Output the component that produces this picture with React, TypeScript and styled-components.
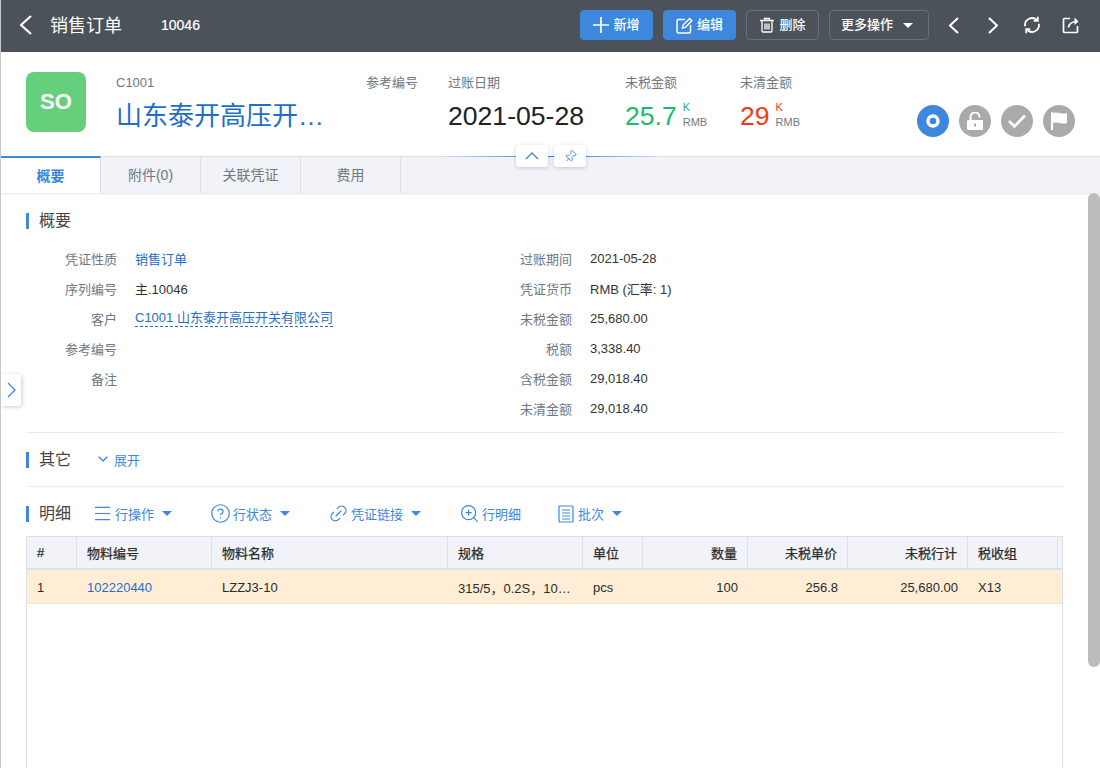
import React from 'react'
import styled, { createGlobalStyle } from 'styled-components'
import { ChevronDown, CircleHelp, Link2, Menu, Pin, ZoomIn } from 'lucide-react'

const blue = '#3d87dd'
const line = '#dcdfe8'

const Global = createGlobalStyle`
  html, body { margin: 0; height: 100%; overflow: hidden; background: #fff; }
  body { font-family: "Liberation Sans", "Noto Sans CJK SC", sans-serif; color: #333; }
  * { box-sizing: border-box; }
`

const Page = styled.div`
  position: relative;
  height: 768px;
  overflow: hidden;
  border-left: 1px solid #c8c8c8;
`

const TopBar = styled.header`
  height: 52px;
  background: #4b5259;
  display: flex;
  align-items: center;
  padding-right: 10px;
  color: #fff;
`

const BackButton = styled.button`
  width: 49px;
  height: 52px;
  padding: 0 0 2px 19px;
  border: 0;
  background: none;
  color: #fff;
  display: flex;
  align-items: center;
  justify-content: flex-start;
`

const PageTitle = styled.h1`
  margin: 0 0 4px;
  width: 111px;
  font-size: 18px;
  font-weight: 400;
`

const DocNumber = styled.span`
  font-size: 14px;
  margin-bottom: 2px;
  -webkit-text-stroke: 0.2px #fff;
`

const TopActions = styled.div`
  margin-left: auto;
  margin-top: -2px;
  display: flex;
  align-items: center;
  gap: 10px;
`

const TopButton = styled.button<{ $primary?: boolean; $width: number }>`
  width: ${p => p.$width}px;
  height: 30px;
  padding: 0 0 3px;
  display: flex;
  align-items: center;
  justify-content: center;
  gap: 4px;
  border-radius: 4px;
  border: 1px solid ${p => (p.$primary ? blue : '#67717d')};
  background: ${p => (p.$primary ? blue : 'transparent')};
  color: #fff;
  font: inherit;
  font-size: 13px;
  font-weight: 500;

  svg {
    margin-top: 3px;
  }
`

const Caret = styled.i<{ $color?: string }>`
  display: inline-block;
  width: 0;
  height: 0;
  margin-top: ${p => (p.$color ? 0 : 3)}px;
  margin-left: ${p => (p.$color ? 4 : 6)}px;
  margin-right: ${p => (p.$color ? 0 : 4)}px;
  border-left: 5px solid transparent;
  border-right: 5px solid transparent;
  border-top: 5px solid ${p => p.$color || '#fff'};
`

const NavIcons = styled.div`
  display: flex;
  margin-left: -5px;
`

const NavIcon = styled.span`
  width: 39px;
  height: 30px;
  display: flex;
  align-items: center;
  justify-content: center;
  color: #fff;
`

const Summary = styled.section`
  height: 104px;
  background: #fff;
  display: flex;
  padding: 20px 25px 0 25px;
`

const Badge = styled.div`
  width: 60px;
  height: 60px;
  border-radius: 8px;
  background: #66cf7b;
  color: #fff;
  font-size: 22px;
  font-weight: 700;
  display: flex;
  align-items: center;
  justify-content: center;
`

const Stat = styled.div<{ $width: number; $left?: number }>`
  width: ${p => p.$width}px;
  margin-left: ${p => p.$left || 0}px;
  flex: none;
`

const StatLabel = styled.div`
  font-size: 13px;
  line-height: 22px;
  color: #6f7884;
`

const CustomerName = styled.div`
  width: 210px;
  margin-top: 3px;
  font-size: 26px;
  line-height: 38px;
  color: #1f6ec9;
  white-space: nowrap;
  overflow: hidden;
  text-overflow: ellipsis;
`

const BigValue = styled.div<{ $color?: string }>`
  margin-top: 3px;
  font-size: 26.6px;
  line-height: 38px;
  color: ${p => p.$color || '#222'};
`

const AmountRow = styled.div`
  display: flex;
  align-items: flex-start;
  gap: 6px;
`

const Unit = styled.div<{ $color: string }>`
  margin-top: 6px;
  font-size: 11px;
  line-height: 15px;
  color: #6f7884;

  b {
    display: block;
    font-weight: 400;
    color: ${p => p.$color};
  }
`

const StatusIcons = styled.div`
  margin-left: auto;
  margin-top: 33px;
  display: flex;
  gap: 10px;
`

const StatusDot = styled.div<{ $active?: boolean }>`
  width: 32px;
  height: 32px;
  border-radius: 50%;
  background: ${p => (p.$active ? blue : '#aaa')};
  display: flex;
  align-items: center;
  justify-content: center;
`

const Collapse = styled.div`
  position: absolute;
  left: 515px;
  top: 145px;
  display: flex;
  gap: 6px;
  z-index: 2;
`

const CollapseButton = styled.span`
  width: 32px;
  height: 22px;
  background: #fff;
  border-radius: 3px;
  box-shadow: 0 1px 4px rgba(0, 0, 0, 0.18);
  color: ${blue};
  display: flex;
  align-items: center;
  justify-content: center;
`

const Tabs = styled.nav`
  position: relative;
  height: 37px;
  display: flex;
  background: #f1f3f8;
  border-top: 1px solid ${line};
  box-shadow: 0 1px 2px rgba(0, 0, 0, 0.1);

  &::before {
    content: '';
    position: absolute;
    left: 440px;
    top: -1px;
    width: 220px;
    height: 1px;
    background: linear-gradient(90deg, rgba(61, 135, 221, 0), ${blue} 45%, ${blue} 60%, rgba(61, 135, 221, 0));
  }
`

const Tab = styled.div<{ $active?: boolean }>`
  width: 100px;
  display: flex;
  align-items: center;
  justify-content: center;
  padding-bottom: 2px;
  font-size: 14px;
  font-weight: ${p => (p.$active ? 700 : 400)};
  color: ${p => (p.$active ? blue : '#6f7884')};
  background: ${p => (p.$active ? '#fff' : 'transparent')};
  border-right: 1px solid ${line};
  ${p => p.$active && `margin-top: -1px; border-top: 2px solid ${blue};`}
`

const Content = styled.main`
  padding: 6px 37px 0 25px;
`

const SectionHead = styled.div<{ $height: number; $top?: number }>`
  display: flex;
  align-items: center;
  height: ${p => p.$height}px;
  padding-top: ${p => p.$top || 0}px;
`

const SectionTitle = styled.h2`
  margin: 0;
  padding-left: 10px;
  border-left: 3px solid ${blue};
  font-size: 16px;
  line-height: 16px;
  font-weight: 400;
  color: #444;
`

const Divider = styled.hr`
  margin: 0;
  border: 0;
  border-top: 1px solid #ececf0;
`

const Fields = styled.div`
  display: grid;
  grid-template-columns: 455px 1fr;
  padding-bottom: 9px;
`

const FieldRow = styled.div`
  display: flex;
  height: 30px;
  align-items: center;
  font-size: 13px;
`

const FieldLabel = styled.span`
  width: 91px;
  margin-right: 18px;
  text-align: right;
  color: #6f7884;
`

const FieldLink = styled.span<{ $dashed?: boolean }>`
  color: #1f6ec9;
  ${p => p.$dashed && `border-bottom: 1px dashed #1f6ec9; line-height: 16px;`}
`

const ExpandLink = styled.span`
  margin-left: 24px;
  padding-bottom: 2px;
  display: flex;
  align-items: center;
  gap: 3px;
  font-size: 13px;
  color: ${blue};
`

const LineTools = styled.div`
  margin-left: 22px;
  display: flex;
  gap: 39px;
`

const LineTool = styled.span<{ $left?: number }>`
  display: flex;
  align-items: center;
  gap: 4px;
  margin-left: ${p => p.$left || 0}px;
  font-size: 13px;
  color: ${blue};
`

const LineIcon = styled.span<{ $width?: number }>`
  width: ${p => p.$width || 18}px;
  height: 18px;
  display: flex;
  align-items: center;
  justify-content: center;

  svg {
    flex: none;
  }
`

const Grid = styled.div`
  height: 240px;
  border: solid ${line};
  border-width: 1px 1px 0 1px;
`

const GridRow = styled.div<{ $head?: boolean }>`
  display: flex;
  height: ${p => (p.$head ? 33 : 34)}px;
  padding-top: ${p => (p.$head ? 0 : 2)}px;
  background: ${p => (p.$head ? '#f1f3f8' : '#ffeed5')};
  border-bottom: ${p => (p.$head ? `2px solid ${line}` : '1px solid #f5e5cd')};
`

const Cell = styled.div<{ $width: number; $right?: boolean; $head?: boolean; $link?: boolean }>`
  flex: none;
  width: ${p => p.$width}px;
  padding: 0 10px;
  display: flex;
  align-items: center;
  justify-content: ${p => (p.$right ? 'flex-end' : 'flex-start')};
  font-size: 13px;
  font-weight: 400;
  color: ${p => (p.$link ? '#1f6ec9' : '#2b2b2b')};
  border-right: ${p => (p.$head ? `1px solid ${line}` : '0')};
  white-space: nowrap;
  overflow: hidden;
  ${p => p.$head && `-webkit-text-stroke: 0.25px #2b2b2b;`}

  span {
    overflow: hidden;
    text-overflow: ellipsis;
  }
`

const ScrollThumb = styled.div`
  position: absolute;
  right: 0;
  top: 193px;
  width: 12px;
  height: 474px;
  border-radius: 6px;
  background: #bcbcbc;
`

const SideHandle = styled.div`
  position: absolute;
  left: 0;
  top: 374px;
  width: 20px;
  height: 32px;
  background: #fff;
  border-radius: 0 3px 3px 0;
  box-shadow: 1px 1px 4px rgba(0, 0, 0, 0.2);
  color: ${blue};
  display: flex;
  align-items: center;
  justify-content: center;
`

const ChevronGlyph = ({ dir, w, h, sw = 2 }: { dir: 'left' | 'right' | 'up'; w: number; h: number; sw?: number }) => {
  const d =
    dir === 'left'
      ? `M${w - 1} 1L1 ${h / 2} ${w - 1} ${h - 1}`
      : dir === 'right'
        ? `M1 1L${w - 1} ${h / 2} 1 ${h - 1}`
        : `M1 ${h - 1}L${w / 2} 1 ${w - 1} ${h - 1}`
  return (
    <svg width={w} height={h} viewBox={`0 0 ${w} ${h}`} fill="none" stroke="currentColor" strokeWidth={sw}>
      <path d={d} />
    </svg>
  )
}

const PlusIcon = () => (
  <svg width="16" height="16" viewBox="0 0 16 16" fill="none" stroke="#fff" strokeWidth="1.7">
    <path d="M8 0v16M0 8h16" />
  </svg>
)

const EditIcon = () => (
  <svg width="17" height="17" viewBox="0 0 17 17" fill="none" stroke="#fff" strokeWidth="1.5">
    <path d="M9 2.5H2.5a1.5 1.5 0 0 0-1.5 1.5V14.5A1.5 1.5 0 0 0 2.5 16H13a1.5 1.5 0 0 0 1.5-1.5V8" />
    <path d="M6.5 11l.6-3L13.6 1.5l2.2 2.2L9.4 10.4z" />
  </svg>
)

const TrashIcon = () => (
  <svg width="16" height="16" viewBox="0 0 16 16" fill="none" stroke="#fff" strokeWidth="1.3">
    <path d="M1 3.5h14M5.5 3.5V1.5h5v2M3 3.5v10.5a1 1 0 0 0 1 1h8a1 1 0 0 0 1-1V3.5M6 6.5v6M8 6.5v6M10 6.5v6" />
  </svg>
)

const RefreshIcon = () => (
  <svg width="18" height="18" viewBox="0 0 18 18" fill="none" stroke="#fff" strokeWidth="1.8" strokeLinecap="round">
    <path d="M2 9.5A7 7 0 0 1 13.8 4M16 8.5A7 7 0 0 1 4.2 14" />
    <path d="M14.8 1.5v3.4h-3.4M3.2 16.5v-3.4h3.4" />
  </svg>
)

const ShareIcon = () => (
  <svg width="18" height="18" viewBox="0 0 18 18" fill="none" stroke="#fff" strokeWidth="1.7">
    <path d="M8 2.5H2.5a1 1 0 0 0-1 1V15.5a1 1 0 0 0 1 1H14.5a1 1 0 0 0 1-1V10" />
    <path d="M6.5 11.5C7 7.5 10 5.5 15.5 5.5" />
    <path d="M12.5 1.5l4 4-4 3.5" fill="#fff" stroke="none" />
  </svg>
)

const LockIcon = () => (
  <svg width="16" height="18" viewBox="0 0 16 18" fill="#fff">
    <path d="M1 8h14a1 1 0 0 1 1 1v8a1 1 0 0 1-1 1H1a1 1 0 0 1-1-1V9a1 1 0 0 1 1-1zm6 3.5v3h2v-3z" fillRule="evenodd" />
    <path d="M3.5 8V5a4.5 4.5 0 0 1 9 0v.5" fill="none" stroke="#fff" strokeWidth="2" />
  </svg>
)

const CheckIcon = () => (
  <svg width="20" height="16" viewBox="0 0 20 16" fill="none" stroke="#fff" strokeWidth="2.6">
    <path d="M2 8l5.5 5.5L18 2.5" />
  </svg>
)

const FlagIcon = () => (
  <svg width="18" height="20" viewBox="0 0 18 20" fill="#fff">
    <path d="M1 1h2v18H1zM3 2c4-2 8 2 14 0v10c-6 2-10-2-14 0z" />
  </svg>
)

const ListIcon = () => (
  <svg width="16" height="18" viewBox="0 0 16 18" fill="none" stroke={blue} strokeWidth="1.2">
    <rect x="1" y="1" width="14" height="16" rx="1" />
    <path d="M4 5h8M4 8h8M4 11h8M4 14h8" />
  </svg>
)

const columns = [50, 135, 236, 135, 60, 105, 100, 120, 90]

const heads: [string, boolean?][] = [
  ['#'],
  ['物料编号'],
  ['物料名称'],
  ['规格'],
  ['单位'],
  ['数量', true],
  ['未税单价', true],
  ['未税行计', true],
  ['税收组'],
]

const rowCells: [string, boolean?][] = [
  ['1'],
  ['102220440'],
  ['LZZJ3-10'],
  ['315/5，0.2S，10P10，15/15VA，31.5kA'],
  ['pcs'],
  ['100', true],
  ['256.8', true],
  ['25,680.00', true],
  ['X13'],
]

const leftFields = [
  { label: '凭证性质', link: '销售订单' },
  { label: '序列编号', value: '主.10046' },
  { label: '客户', link: 'C1001 山东泰开高压开关有限公司', dashed: true },
  { label: '参考编号' },
  { label: '备注' },
]

const rightFields = [
  { label: '过账期间', value: '2021-05-28' },
  { label: '凭证货币', value: 'RMB (汇率: 1)' },
  { label: '未税金额', value: '25,680.00' },
  { label: '税额', value: '3,338.40' },
  { label: '含税金额', value: '29,018.40' },
  { label: '未清金额', value: '29,018.40' },
]

export default function App() {
  return (
    <Page>
      <Global />
      <TopBar>
        <BackButton><ChevronGlyph dir="left" w={12} h={20} sw={2.2} /></BackButton>
        <PageTitle>销售订单</PageTitle>
        <DocNumber>10046</DocNumber>
        <TopActions>
          <TopButton $primary $width={73}><PlusIcon />新增</TopButton>
          <TopButton $primary $width={73}><EditIcon />编辑</TopButton>
          <TopButton $width={73}><TrashIcon />删除</TopButton>
          <TopButton $width={100}>更多操作<Caret /></TopButton>
          <NavIcons>
            <NavIcon><ChevronGlyph dir="left" w={10} h={17} /></NavIcon>
            <NavIcon><ChevronGlyph dir="right" w={10} h={17} /></NavIcon>
            <NavIcon><RefreshIcon /></NavIcon>
            <NavIcon><ShareIcon /></NavIcon>
          </NavIcons>
        </TopActions>
      </TopBar>

      <Summary>
        <Badge>SO</Badge>
        <Stat $width={250} $left={30}>
          <StatLabel>C1001</StatLabel>
          <CustomerName>山东泰开高压开关有限公司</CustomerName>
        </Stat>
        <Stat $width={82}><StatLabel>参考编号</StatLabel></Stat>
        <Stat $width={177}>
          <StatLabel>过账日期</StatLabel>
          <BigValue>2021-05-28</BigValue>
        </Stat>
        <Stat $width={115}>
          <StatLabel>未税金额</StatLabel>
          <AmountRow>
            <BigValue $color="#1bbb6b">25.7</BigValue>
            <Unit $color="#1bbb6b"><b>K</b>RMB</Unit>
          </AmountRow>
        </Stat>
        <Stat $width={100}>
          <StatLabel>未清金额</StatLabel>
          <AmountRow>
            <BigValue $color="#ee3b14">29</BigValue>
            <Unit $color="#ee3b14"><b>K</b>RMB</Unit>
          </AmountRow>
        </Stat>
        <StatusIcons>
          <StatusDot $active>
            <svg width="14" height="14" viewBox="0 0 14 14" fill="none" stroke="#fff" strokeWidth="3.4">
              <circle cx="7" cy="7" r="5" />
            </svg>
          </StatusDot>
          <StatusDot><LockIcon /></StatusDot>
          <StatusDot><CheckIcon /></StatusDot>
          <StatusDot><FlagIcon /></StatusDot>
        </StatusIcons>
      </Summary>

      <Collapse>
        <CollapseButton><ChevronGlyph dir="up" w={14} h={8} sw={1.3} /></CollapseButton>
        <CollapseButton><Pin size={13} strokeWidth={1.6} style={{ transform: 'rotate(40deg)' }} /></CollapseButton>
      </Collapse>

      <Tabs>
        <Tab $active>概要</Tab>
        <Tab>附件(0)</Tab>
        <Tab>关联凭证</Tab>
        <Tab>费用</Tab>
      </Tabs>

      <Content>
        <SectionHead $height={44}><SectionTitle>概要</SectionTitle></SectionHead>
        <Fields>
          <div>
            {leftFields.map(f => (
              <FieldRow key={f.label}>
                <FieldLabel>{f.label}</FieldLabel>
                {f.link ? <FieldLink $dashed={f.dashed}>{f.link}</FieldLink> : f.value}
              </FieldRow>
            ))}
          </div>
          <div>
            {rightFields.map(f => (
              <FieldRow key={f.label}>
                <FieldLabel>{f.label}</FieldLabel>
                {f.value}
              </FieldRow>
            ))}
          </div>
        </Fields>
        <Divider />
        <SectionHead $height={53} $top={1}>
          <SectionTitle>其它</SectionTitle>
          <ExpandLink><ChevronDown size={16} />展开</ExpandLink>
        </SectionHead>
        <Divider />
        <SectionHead $height={49} $top={4}>
          <SectionTitle>明细</SectionTitle>
          <LineTools>
            <LineTool><LineIcon><Menu size={21} strokeWidth={1.4} /></LineIcon>行操作<Caret $color={blue} /></LineTool>
            <LineTool><LineIcon><CircleHelp size={21} strokeWidth={1.4} /></LineIcon>行状态<Caret $color={blue} /></LineTool>
            <LineTool><LineIcon><Link2 size={21} strokeWidth={1.4} style={{ transform: 'rotate(-45deg)' }} /></LineIcon>凭证链接<Caret $color={blue} /></LineTool>
            <LineTool><LineIcon><ZoomIn size={21} strokeWidth={1.4} /></LineIcon>行明细</LineTool>
            <LineTool $left={-2}><LineIcon $width={16}><ListIcon /></LineIcon>批次<Caret $color={blue} /></LineTool>
          </LineTools>
        </SectionHead>
        <Grid>
          <GridRow $head>
            {heads.map(([text, right], i) => (
              <Cell key={text} $head $right={right} $width={columns[i]}>{text}</Cell>
            ))}
          </GridRow>
          <GridRow>
            {rowCells.map(([text, right], i) => (
              <Cell key={text} $right={right} $link={i === 1} $width={columns[i]}><span>{text}</span></Cell>
            ))}
          </GridRow>
        </Grid>
      </Content>

      <SideHandle><ChevronGlyph dir="right" w={9} h={16} sw={1.3} /></SideHandle>
      <ScrollThumb />
    </Page>
  )
}
